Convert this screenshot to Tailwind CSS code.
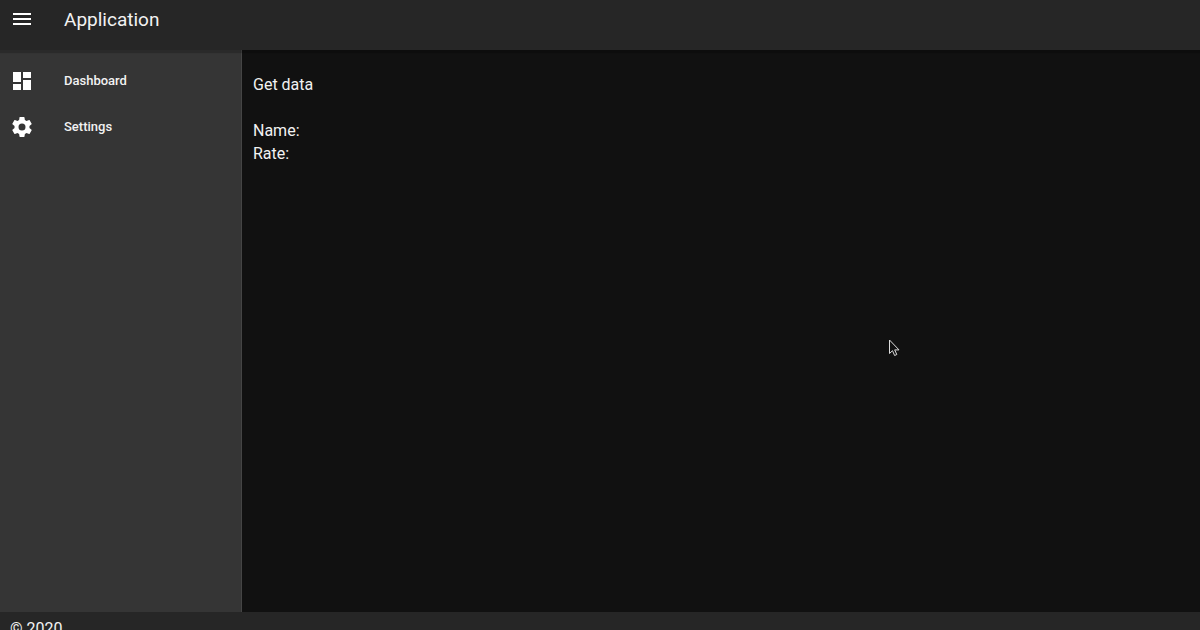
<!DOCTYPE html>
<html lang="en">
<head>
    <meta charset="UTF-8">
    <meta name="viewport" content="width=device-width, initial-scale=1.0">
    <script src="https://cdn.jsdelivr.net/npm/@tailwindcss/browser@4"></script>
    <title>Application</title>
</head>
<body class="relative flex flex-col h-screen overflow-hidden bg-[#111111] text-[#f2f2f2] font-['Roboto',sans-serif]">
    <header class="z-10 flex items-start h-[50px] shrink-0 px-2.5 pt-[7px] gap-[30px] bg-[#262626] shadow-[0_3px_1px_rgba(0,0,0,0.2)]">
        <button type="button" aria-label="Toggle menu">
            <svg class="block size-6 fill-white" viewBox="0 0 24 24"><path d="M3 6h18v2H3V6m0 5h18v2H3v-2m0 5h18v2H3v-2z"/></svg>
        </button>
        <h1 class="text-[19px] leading-[26px]">Application</h1>
    </header>
    <div class="flex flex-1 min-h-0">
        <nav class="w-[242px] shrink-0 bg-[#353535] border-r border-[#454545] pt-2">
            <a href="#" class="flex items-center h-[46px] px-2.5 gap-[30px]">
                <svg class="size-6 fill-white" viewBox="0 0 24 24"><path d="M13 3v6h8V3m-8 18h8V11h-8M3 21h8v-6H3m0-2h8V3H3v10z"/></svg>
                <span class="text-[13px] leading-5 font-medium">Dashboard</span>
            </a>
            <a href="#" class="flex items-center h-[46px] px-2.5 gap-[30px]">
                <svg class="size-6 fill-white" viewBox="0 0 24 24"><path d="M12 15.5A3.5 3.5 0 0 1 8.5 12 3.5 3.5 0 0 1 12 8.5a3.5 3.5 0 0 1 3.5 3.5 3.5 3.5 0 0 1-3.5 3.5m7.43-2.53c.04-.32.07-.64.07-.97s-.03-.66-.07-1l2.11-1.63c.19-.15.24-.42.12-.64l-2-3.46c-.12-.22-.39-.31-.61-.22l-2.49 1c-.52-.39-1.06-.73-1.69-.98l-.37-2.65A.506.506 0 0 0 14 2h-4c-.25 0-.46.18-.5.42l-.37 2.65c-.63.25-1.17.59-1.69.98l-2.49-1c-.22-.09-.49 0-.61.22l-2 3.46c-.13.22-.07.49.12.64L4.57 11c-.04.34-.07.67-.07 1s.03.65.07.97l-2.11 1.66c-.19.15-.25.42-.12.64l2 3.46c.12.22.39.3.61.22l2.49-1.01c.52.4 1.06.74 1.69.99l.37 2.65c.04.24.25.42.5.42h4c.25 0 .46-.18.5-.42l.37-2.65c.63-.26 1.17-.59 1.69-.99l2.49 1.01c.22.08.49 0 .61-.22l2-3.46c.12-.22.07-.49-.12-.64l-2.11-1.66z"/></svg>
                <span class="text-[13px] leading-5 font-medium">Settings</span>
            </a>
        </nav>
        <main class="flex-1 px-[11px] pt-[23px] text-base leading-[23px]">
            <button type="button" class="block mb-[23px]">Get data</button>
            <p>Name:</p>
            <p>Rate:</p>
        </main>
    </div>
    <footer class="h-[18px] shrink-0 overflow-hidden px-2.5 pt-[5px] bg-[#262626] text-base leading-6">© 2020</footer>
    <!-- mouse pointer -->
    <svg class="absolute left-[888px] top-[338px] w-3.5 h-5" viewBox="0 0 14 20"><path d="M1.5 2v13.5l3-2.8 2.1 4.8 2.2-1-2.1-4.6h4.3z" fill="#111" stroke="#ddd"/></svg>
</body>
</html>
